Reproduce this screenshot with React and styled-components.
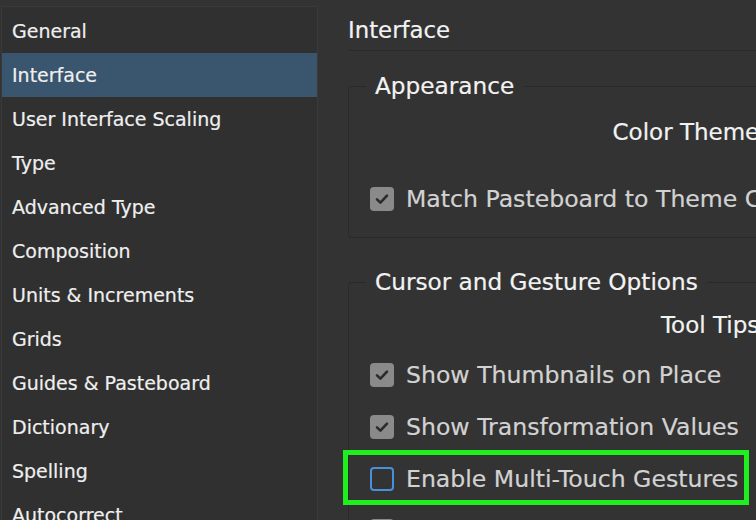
import styled, { createGlobalStyle } from "styled-components";

const GlobalStyle = createGlobalStyle`
  html, body {
    margin: 0;
    padding: 0;
    background: #333333;
  }
  body {
    font-family: "DejaVu Sans", "Liberation Sans", sans-serif;
    -webkit-font-smoothing: antialiased;
    -webkit-text-stroke: 0.2px currentColor;
  }
`;

const Window = styled.div`
  display: flex;
  width: 756px;
  height: 520px;
  overflow: hidden;
  background: #333333;
  color: #f2f2f2;
`;

const Sidebar = styled.ul`
  flex: none;
  list-style: none;
  width: 317px;
  margin: 6px 0 0 1px;
  padding: 2px 0 0;
  background: #303030;
  border: 1px solid #3a3a3a;
  border-bottom: none;
  box-sizing: border-box;
`;

const NavItem = styled.li`
  height: 44px;
  line-height: 44px;
  padding-left: 10px;
  font-size: 19px;
  color: #efefef;
  white-space: nowrap;
  background: ${(p) => (p.$active ? "#3a556e" : "transparent")};
`;

const Panel = styled.div`
  flex: none;
  width: 700px;
  padding-left: 30px;
`;

const Title = styled.h1`
  margin: 0;
  padding-top: 10px;
  height: 40px;
  line-height: 40px;
  font-size: 22.8px;
  font-weight: normal;
  color: #f2f2f2;
  border-bottom: 1px solid #2a2a2a;
`;

const Group = styled.fieldset`
  margin: ${(p) => p.$top}px 0 0 0;
  padding: 0 0 ${(p) => p.$bottom}px;
  border: 1px solid #292929;
  border-radius: 3px;
  min-width: 0;
`;

const Legend = styled.legend`
  margin-left: 17px;
  padding: 0 9px;
  height: 28px;
  line-height: 28px;
  font-size: 23.2px;
  color: #f2f2f2;
`;

const FieldRow = styled.div`
  display: grid;
  grid-template-columns: 418px 1fr;
  height: 44px;
  margin-top: ${(p) => p.$top}px;
  align-items: center;
`;

const FieldLabel = styled.span`
  text-align: right;
  font-size: 23px;
  color: #f2f2f2;
  white-space: nowrap;
`;

const CheckRow = styled.label`
  position: relative;
  display: flex;
  align-items: center;
  gap: 12px;
  height: 44px;
  margin-top: ${(p) => p.$top}px;
  padding-left: 21px;
  white-space: nowrap;
  font-size: 23.6px;
  color: #d2d2d2;

  ${(p) =>
    p.$highlight &&
    `
    &::after {
      content: "";
      position: absolute;
      left: -6px;
      top: -7px;
      width: 406px;
      height: 55px;
      box-sizing: border-box;
      border: 5px solid #1fee1f;
      pointer-events: none;
    }
  `}
`;

const Box = styled.span`
  flex: none;
  display: flex;
  align-items: center;
  justify-content: center;
  width: 24px;
  height: 24px;
  box-sizing: border-box;
  border-radius: 4px;
  background: ${(p) => (p.$checked ? "#8a8a8a" : "transparent")};
  border: ${(p) => (p.$checked ? "none" : "2px solid #4a8fdb")};
`;

const Check = () => (
  <svg width="16" height="16" viewBox="0 0 16 16">
    <path
      d="M3 8.4 L6.4 11.6 L13 4.6"
      fill="none"
      stroke="#2b2b2b"
      strokeWidth="2.6"
      strokeLinecap="round"
      strokeLinejoin="round"
    />
  </svg>
);

function Checkbox({ checked, label, top, highlight }) {
  return (
    <CheckRow $top={top} $highlight={highlight}>
      <Box $checked={checked}>{checked && <Check />}</Box>
      {label}
    </CheckRow>
  );
}

const navItems = [
  "General",
  "Interface",
  "User Interface Scaling",
  "Type",
  "Advanced Type",
  "Composition",
  "Units & Increments",
  "Grids",
  "Guides & Pasteboard",
  "Dictionary",
  "Spelling",
  "Autocorrect",
];

export default function App() {
  return (
    <>
      <GlobalStyle />
      <Window>
        <Sidebar>
          {navItems.map((item) => (
            <NavItem key={item} $active={item === "Interface"}>
              {item}
            </NavItem>
          ))}
        </Sidebar>

        <Panel>
          <Title>Interface</Title>

          <Group $top={21} $bottom={16}>
            <Legend>Appearance</Legend>
            <FieldRow $top={10}>
              <FieldLabel>Color Theme:</FieldLabel>
            </FieldRow>
            <Checkbox checked top={23} label="Match Pasteboard to Theme Color" />
          </Group>

          <Group $top={30} $bottom={20}>
            <Legend>Cursor and Gesture Options</Legend>
            <FieldRow $top={7}>
              <FieldLabel>Tool Tips:</FieldLabel>
            </FieldRow>
            <Checkbox checked top={6} label="Show Thumbnails on Place" />
            <Checkbox checked top={8} label="Show Transformation Values" />
            <Checkbox top={8} highlight label="Enable Multi-Touch Gestures" />
            <Checkbox checked top={8} label="Highlight Object Under Selection Tool" />
          </Group>
        </Panel>
      </Window>
    </>
  );
}
